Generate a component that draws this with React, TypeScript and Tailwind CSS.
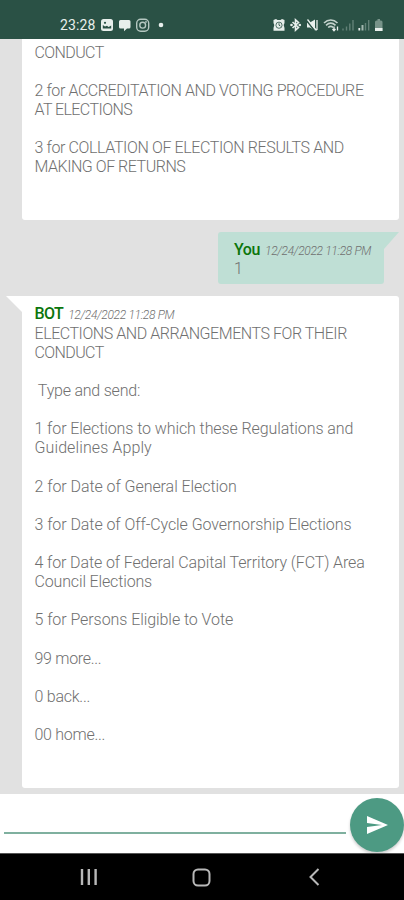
import clsx from "clsx";

type Line = { text: string; track?: string };

const PREVIOUS: Line[] = [
  { text: "CONDUCT", track: "tracking-[-0.6px]" },
  { text: "" },
  { text: "2 for ACCREDITATION AND VOTING PROCEDURE", track: "tracking-[-0.41px]" },
  { text: "AT ELECTIONS", track: "tracking-[-0.57px]" },
  { text: "" },
  { text: "3 for COLLATION OF ELECTION RESULTS AND", track: "tracking-[-0.38px]" },
  { text: "MAKING OF RETURNS", track: "tracking-[-0.47px]" },
];

const REPLY: Line[] = [
  { text: "ELECTIONS AND ARRANGEMENTS FOR THEIR", track: "tracking-[-0.45px]" },
  { text: "CONDUCT", track: "tracking-[-0.6px]" },
  { text: "" },
  { text: " Type and send:", track: "tracking-[-0.22px]" },
  { text: "" },
  { text: "1 for Elections to which these Regulations and", track: "tracking-[-0.09px]" },
  { text: "Guidelines Apply", track: "tracking-[0.1px]" },
  { text: "" },
  { text: "2 for Date of General Election", track: "tracking-[-0.06px]" },
  { text: "" },
  { text: "3 for Date of Off-Cycle Governorship Elections", track: "tracking-[-0.07px]" },
  { text: "" },
  { text: "4 for Date of Federal Capital Territory (FCT) Area", track: "tracking-[-0.12px]" },
  { text: "Council Elections", track: "tracking-[-0.15px]" },
  { text: "" },
  { text: "5 for Persons Eligible to Vote", track: "tracking-[-0.07px]" },
  { text: "" },
  { text: "99 more...", track: "tracking-[-0.3px]" },
  { text: "" },
  { text: "0 back...", track: "tracking-[-0.25px]" },
  { text: "" },
  { text: "00 home...", track: "tracking-[-0.27px]" },
];

function Lines({ lines }: { lines: Line[] }) {
  return (
    <div className="text-[16px] font-light leading-[19.12px] text-[#707070]">
      {lines.map((l, i) => (
        <p key={i} className={clsx("h-[19.12px] whitespace-pre", l.track)}>
          {l.text}
        </p>
      ))}
    </div>
  );
}

function StatusBar() {
  return (
    <header className="flex h-[39px] shrink-0 items-end bg-[#2a5145] pb-[6px] pl-[60px] pr-[20px] text-[#e8efec]">
      <span className="text-[14px] leading-[16px] tracking-[0.1px]">23:28</span>
      <svg className="ml-[5px] h-4 w-[66px]" viewBox="0 0 66 16" fill="none">
        {/* gallery */}
        <rect x="1" y="2" width="12" height="12" rx="2.5" fill="currentColor" />
        <path d="M2.8 11.5V8l2.2 1.5 2-.8 1.6 1.2 2.6-1.5v3.1z" fill="#2a5145" />
        <circle cx="5" cy="5.8" r="1.1" fill="#2a5145" />
        {/* message */}
        <path d="M20.5 3h8.500a1.5 1.5 0 0 1 1.5 1.5v5.500a1.5 1.5 0 0 1-1.5 1.5h-2l-3 2.7v-2.700h-3.500a1.5 1.5 0 0 1-1.5-1.5V4.500A1.5 1.5 0 0 1 20.5 3z" fill="currentColor" />
        {/* instagram */}
        <rect x="36.7" y="2.2" width="12" height="12" rx="4" stroke="#b5c8c1" strokeWidth="1.4" />
        <circle cx="42.7" cy="8.2" r="2.9" stroke="#b5c8c1" strokeWidth="1.4" />
        <circle cx="46" cy="4.9" r="0.9" fill="#b5c8c1" />
        <circle cx="61" cy="8" r="2.3" fill="currentColor" />
      </svg>
      <svg className="ml-auto h-4 w-[111px]" viewBox="0 0 111 16" fill="none">
        {/* alarm */}
        <path d="M.5 3 3 2l1.500 1h3L9 2l2.500 1v3l-.8 2 .8 3v2.800H.500V11l.8-3-.8-2z" fill="currentColor" />
        <circle cx="6" cy="8.2" r="3.1" stroke="#2a5145" strokeWidth="0.8" />
        <path d="M6 6.2v2l1.400.8" stroke="#2a5145" strokeWidth="0.9" />
        {/* bluetooth */}
        <path d="m19.5 5 6 5.500-3 2.700V2.800l3 2.700-6 5.500" stroke="currentColor" strokeWidth="1.6" />
        <circle cx="18.5" cy="8" r="1.3" fill="currentColor" />
        <circle cx="26.8" cy="8" r="1.3" fill="currentColor" />
        {/* muted */}
        <path d="M34 5.500h3L42 2.500v11L37 10.500h-3z" fill="currentColor" />
        <path d="m33.500 3.500 8 10" stroke="#2a5145" strokeWidth="1.5" />
        <path d="m34.5 2.500 9 11M44 3v10" stroke="currentColor" strokeWidth="1.3" />
        {/* wifi */}
        <path d="M51 6c4-4 9.500-4 13.500 0M53 8.300c3-2.700 6.500-2.700 9.500 0M55.200 10.500c1.600-1.500 3.500-1.500 5 0" stroke="#c3d2cc" strokeWidth="1.6" />
        <path d="M61 9.500v4M59.500 12l1.500 1.700L62.500 12M64.500 13.500v-4" stroke="currentColor" strokeWidth="1.3" />
        {/* both sims */}
        <path d="M70 11.500v2M73.500 9.500v4M76.800 6.500v7M80 3v10.500" stroke="#628177" strokeWidth="1.4" />
        <path d="M89.500 8v5.500" stroke="#a3b8b0" strokeWidth="2" />
        <path d="M86.300 11v2.500" stroke="#e8efec" strokeWidth="1.8" />
        <path d="M92.500 6v7.500M95.700 3v10.500" stroke="#628177" strokeWidth="1.4" />
        {/* battery */}
        <path d="M104.500 2h2.500v1.500h1a1.5 1.5 0 0 1 1.500 1.500v9h-7.500V5a1.5 1.5 0 0 1 1.500-1.500h1z" fill="#779389" />
        <path d="M102 11h7.500v3h-7.500z" fill="currentColor" />
      </svg>
    </header>
  );
}

function Stamp() {
  return <span className="text-[12px] font-light italic tracking-[-0.33px] text-[#707070]">12/24/2022 11:28 PM</span>;
}

export default function App() {
  return (
    <div className="flex h-[900px] w-[404px] flex-col overflow-hidden bg-white font-['Roboto','Liberation_Sans',sans-serif]">
      <StatusBar />

      <main className="flex h-[755px] shrink-0 flex-col bg-[#e1e1e1] pl-[22px] pr-[5px]">
        <section className="h-[181px] rounded-b-[3px] bg-white pl-[12.5px] pt-[3.7px]">
          <Lines lines={PREVIOUS} />
        </section>

        <section className="relative mr-[15px] mt-[12px] h-[52px] w-[166px] self-end rounded-l-[3px] rounded-br-[3px] bg-[#bfdfd5] pl-[16px] pt-[8px]">
          <svg className="absolute left-full top-0 h-[17px] w-[15px]" viewBox="0 0 15 17">
            <path d="M0 0h15L0 17z" fill="#bfdfd5" />
          </svg>
          <div className="flex h-[19px] items-baseline gap-[5px] whitespace-nowrap leading-[19px]">
            <b className="text-[16px] font-medium tracking-[-0.4px] text-[#0b750b]">You</b>
            <Stamp />
          </div>
          <p className="text-[16px] font-light leading-[19px] text-[#707070]">1</p>
        </section>

        <section className="relative mt-[12px] h-[492px] rounded-r-[3px] rounded-bl-[3px] bg-white pl-[12.5px] pt-[8px]">
          <svg className="absolute right-full top-0 h-[16px] w-[16px]" viewBox="0 0 16 16">
            <path d="M0 0h16v16z" fill="#fff" />
          </svg>
          <div className="flex h-[19.8px] items-baseline gap-[5px] whitespace-nowrap leading-[19px]">
            <b className="text-[16px] font-medium tracking-[-0.6px] text-[#0b750b]">BOT</b>
            <Stamp />
          </div>
          <Lines lines={REPLY} />
        </section>
      </main>

      <footer className="flex h-[59px] shrink-0 justify-between pl-[4px]">
        <input
          aria-label="Message"
          className="mt-[10px] h-[30px] w-[342px] border-b-2 border-[#7fb09f] bg-transparent outline-none"
        />
        <button className="mt-[4px] flex size-[54px] shrink-0 items-center justify-center rounded-full bg-[#4d9a83] shadow-[0_2px_3px_rgba(0,0,0,0.2)]">
          <svg className="h-[18px] w-[21px]" viewBox="0 0 21 18">
            <path d="M0 0 21 9 0 18v-7l15-2L0 7z" fill="#fff" />
          </svg>
        </button>
      </footer>

      <nav className="flex h-[47px] shrink-0 items-center border-t border-[#555] bg-black pl-[80px]">
        <svg className="h-[18px] w-[18px]" viewBox="0 0 18 18">
          <path d="M2 1v16M8.8 1v16M15.6 1v16" stroke="#b8b8b8" strokeWidth="2.4" />
        </svg>
        <svg className="ml-[94px] size-[19px]" viewBox="0 0 19 19" fill="none">
          <rect x="1.5" y="1.5" width="16" height="16" rx="4.5" stroke="#b8b8b8" strokeWidth="2" />
        </svg>
        <svg className="ml-[97px] h-[18px] w-[12px]" viewBox="0 0 12 18" fill="none">
          <path d="M10.5 1 2.5 9l8 8" stroke="#b8b8b8" strokeWidth="2" />
        </svg>
      </nav>
    </div>
  );
}
